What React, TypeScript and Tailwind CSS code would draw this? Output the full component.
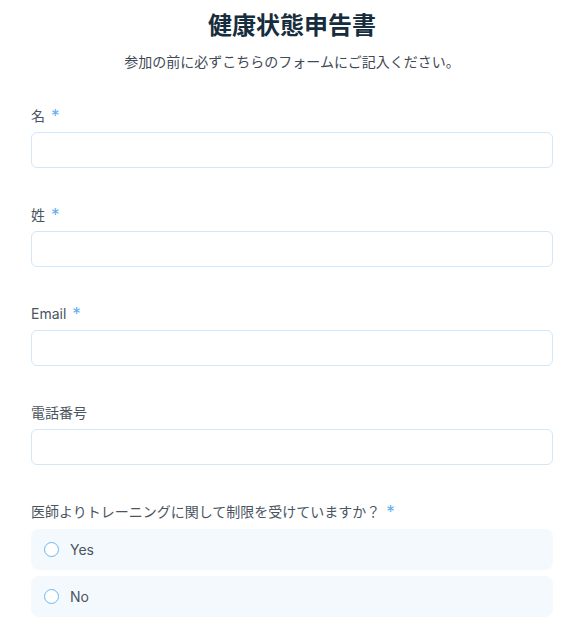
import React from "react";

const fontStack = "font-['Inter','Noto_Sans_CJK_JP',sans-serif]";

const Label: React.FC<{ text: string; required?: boolean }> = ({ text, required }) => (
  <div className="flex items-center h-5 text-[14px] leading-5 text-[#4b5560]">
    <span>{text}</span>
    {required && <span className="ml-[6px] text-[#5eadf2] text-[17px] leading-5">*</span>}
  </div>
);

const Field: React.FC<{ label: string; required?: boolean }> = ({ label, required }) => (
  <div className="flex flex-col gap-[6px]">
    <Label text={label} required={required} />
    <input
      type="text"
      className="h-9 w-full rounded-[6px] border-[1.5px] border-[#d0e7fc] bg-white px-3 text-sm outline-none"
    />
  </div>
);

const RadioRow: React.FC<{ label: string }> = ({ label }) => (
  <label className="flex items-center h-[41px] rounded-[8px] bg-[#f4f9fe] pl-[13px] gap-[11px] cursor-pointer">
    <span className="w-[15px] h-[15px] rounded-full border-[1.75px] border-[#6cb5f4] bg-white" />
    <span className="text-[14px] text-[#4b5560]">{label}</span>
  </label>
);

const App: React.FC = () => {
  return (
    <div className={`min-h-[630px] bg-white ${fontStack}`}>
      <div className="pl-[31px] pr-[21px] pt-[10px]">
        <h1 className="text-center text-[24px] leading-8 font-bold text-[#162d3d]">健康状態申告書</h1>
        <p className="mt-[10px] text-center text-[14px] leading-5 text-[#3f4a55]">
          参加の前に必ずこちらのフォームにご記入ください。
        </p>

        <div className="mt-[34px] flex flex-col gap-[37px]">
          <Field label="名" required />
          <Field label="姓" required />
          <Field label="Email" required />
          <Field label="電話番号" />
          <div className="flex flex-col">
            <Label text="医師よりトレーニングに関して制限を受けていますか？" required />
            <div className="mt-[7px] flex flex-col gap-[6px]">
              <RadioRow label="Yes" />
              <RadioRow label="No" />
            </div>
          </div>
        </div>
      </div>
    </div>
  );
};

export default App;
